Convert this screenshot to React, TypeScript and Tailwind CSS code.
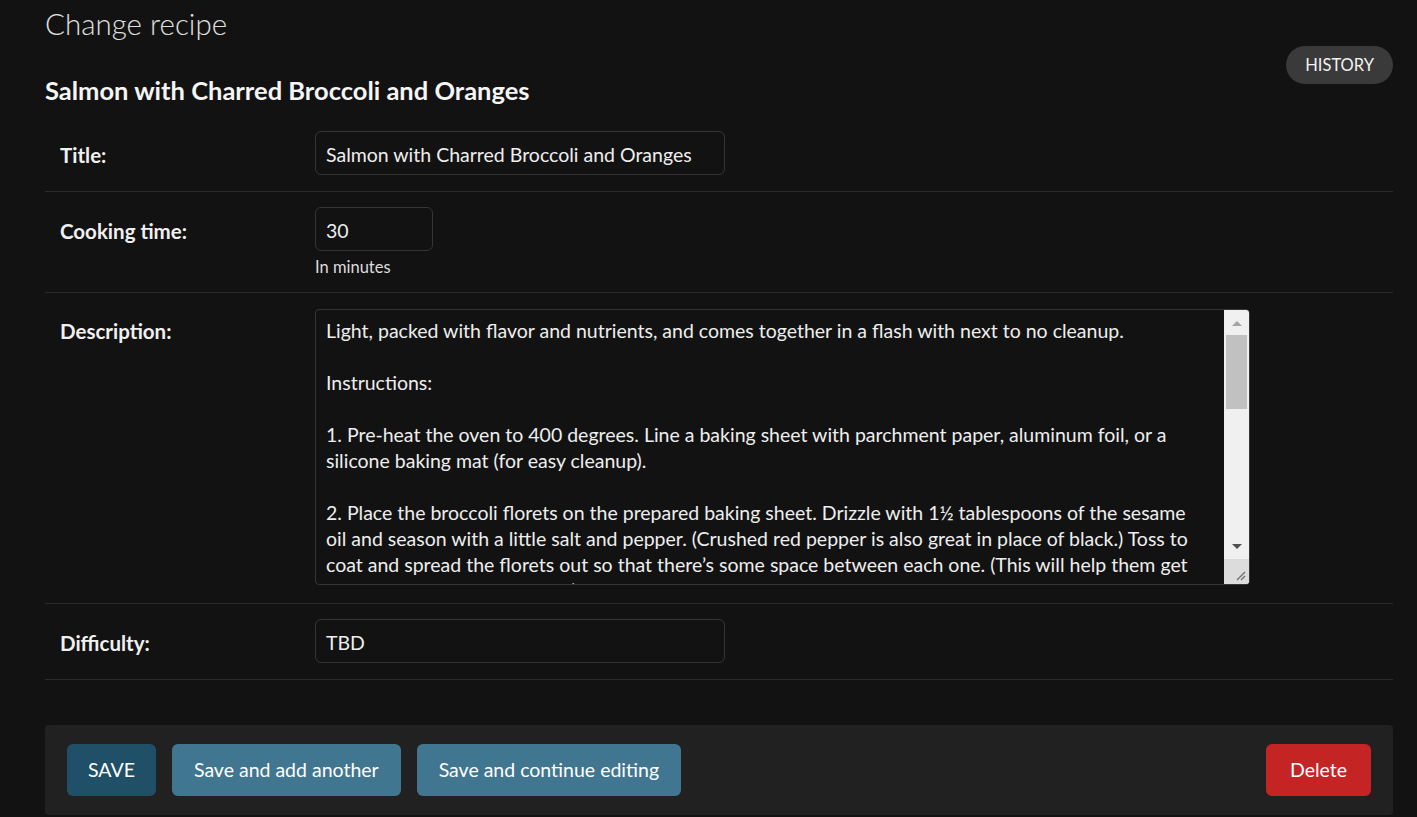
import React from 'react';

const descriptionLines = [
  'Light, packed with flavor and nutrients, and comes together in a flash with next to no cleanup.',
  '',
  'Instructions:',
  '',
  '1. Pre-heat the oven to 400 degrees. Line a baking sheet with parchment paper, aluminum foil, or a',
  'silicone baking mat (for easy cleanup).',
  '',
  '2. Place the broccoli florets on the prepared baking sheet. Drizzle with 1½ tablespoons of the sesame',
  'oil and season with a little salt and pepper. (Crushed red pepper is also great in place of black.) Toss to',
  'coat and spread the florets out so that there’s some space between each one. (This will help them get',
  'nice and crispy on the edges.) Roast until the broccoli is tender and lightly charred, about 10 minutes.',
];

const FieldRow = ({ label, children, className = '', labelClass = 'h-[44px] pt-[4px] leading-[40px]' }) => (
  <div className={`flex items-start border-b border-[#2a2a2a] px-[15px] ${className}`}>
    <label className={`w-[255px] shrink-0 text-[20.5px] font-bold text-[#f0f0f0] ${labelClass}`}>{label}</label>
    <div className="flex flex-col">{children}</div>
  </div>
);

const Scrollbar = () => (
  <div className="flex w-[25px] shrink-0 flex-col bg-[#f0f0f0]">
    <div className="flex h-[25px] items-center justify-center">
      <svg width="12" height="8" viewBox="0 0 12 8">
        <path d="M1 7 L6 2 L11 7 Z" fill="#a3a3a3" />
      </svg>
    </div>
    <div className="mx-[2px] h-[74px] bg-[#c1c1c1]" />
    <div className="flex-1" />
    <div className="flex h-[25px] items-center justify-center">
      <svg width="12" height="8" viewBox="0 0 12 8">
        <path d="M1 1 L6 6 L11 1 Z" fill="#505050" />
      </svg>
    </div>
    <div className="flex h-[25px] items-end justify-end bg-[#dcdcdc] p-[3px]">
      <svg width="12" height="12" viewBox="0 0 12 12">
        <path d="M11 3 L3 11 M11 7 L7 11" stroke="#6f6f6f" strokeWidth="1.3" />
      </svg>
    </div>
  </div>
);

export default function App() {
  return (
    <div
      className="min-h-[817px] bg-[#121212] pb-[3px] pl-[45px] pr-[24px] text-[#eeeeee]"
      style={{ fontFamily: 'Lato, "Open Sans", sans-serif' }}
    >
      <h1 className="pt-[4px] text-[29.5px] font-light leading-[40px] text-[#e0e0e0]">Change recipe</h1>

      <div className="relative">
        <button className="absolute right-0 top-[2px] h-[38px] rounded-full bg-[#3a3a3a] px-[19px] text-[16.5px] text-[#f2f2f2]">
          HISTORY
        </button>
      </div>

      <h2 className="mt-[30px] text-[25.5px] font-bold leading-[32px] text-[#f5f5f5]">
        Salmon with Charred Broccoli and Oranges
      </h2>

      <div className="mt-[10px]">
        <FieldRow label="Title:" className="pb-[16px] pt-[15px]">
          <div className="flex h-[44px] w-[410px] items-center rounded-[6px] border border-[#353535] px-[10px] pt-[3px] text-[19.5px]">
            Salmon with Charred Broccoli and Oranges
          </div>
        </FieldRow>

        <FieldRow label="Cooking time:" className="pb-[14px] pt-[15px]">
          <div className="flex h-[44px] w-[118px] items-center rounded-[6px] border border-[#353535] px-[10px] pt-[3px] text-[19.5px]">
            30
          </div>
          <span className="mt-[5px] text-[16.5px] leading-[22px] text-[#dddddd]">In minutes</span>
        </FieldRow>

        <FieldRow label="Description:" className="pb-[18px] pt-[16px]" labelClass="pt-[9px] leading-[26px]">
          <div className="flex h-[276px] w-[935px] overflow-hidden rounded-[4px] border border-[#353535]">
            <div className="flex-1 overflow-hidden px-[10px] pt-[8px] text-[19.5px] leading-[26px]">
              {descriptionLines.map((line, i) => (
                <div key={i} className="h-[26px] whitespace-pre">
                  {line}
                </div>
              ))}
            </div>
            <Scrollbar />
          </div>
        </FieldRow>

        <FieldRow label="Difficulty:" className="pb-[16px] pt-[15px]">
          <div className="flex h-[44px] w-[410px] items-center rounded-[6px] border border-[#353535] px-[10px] pt-[3px] text-[19.5px]">
            TBD
          </div>
        </FieldRow>
      </div>

      <div className="mt-[45px] flex items-center gap-[16px] rounded-[4px] bg-[#212121] px-[22px] py-[19px]">
        <button className="h-[52px] rounded-[6px] bg-[#205067] px-[21px] text-[19.5px] text-white">SAVE</button>
        <button className="h-[52px] rounded-[6px] bg-[#417690] px-[22px] text-[19.5px] text-white">
          Save and add another
        </button>
        <button className="h-[52px] rounded-[6px] bg-[#417690] px-[22px] text-[19.5px] text-white">
          Save and continue editing
        </button>
        <button className="ml-auto h-[52px] rounded-[6px] bg-[#c42424] px-[24px] text-[19.5px] text-white">
          Delete
        </button>
      </div>
    </div>
  );
}
